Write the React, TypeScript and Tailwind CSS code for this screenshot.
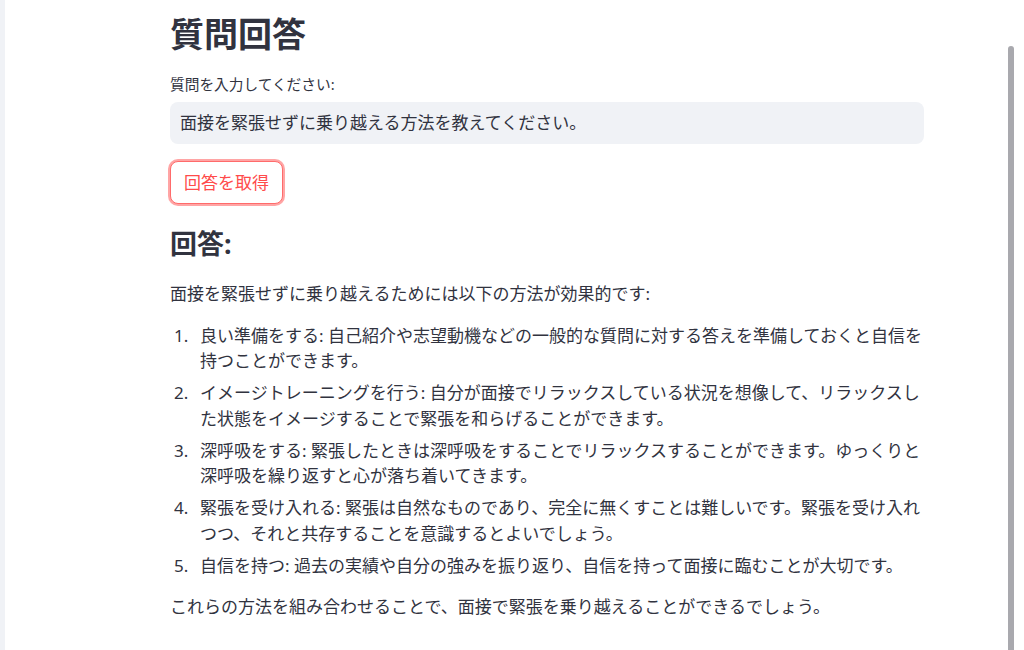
import React from "react";

const items: [string, string][] = [
  ["良い準備をする", "自己紹介や志望動機などの一般的な質問に対する答えを準備しておくと自信を持つことができます。"],
  ["イメージトレーニングを行う", "自分が面接でリラックスしている状況を想像して、リラックスした状態をイメージすることで緊張を和らげることができます。"],
  ["深呼吸をする", "緊張したときは深呼吸をすることでリラックスすることができます。ゆっくりと深呼吸を繰り返すと心が落ち着いてきます。"],
  ["緊張を受け入れる", "緊張は自然なものであり、完全に無くすことは難しいです。緊張を受け入れつつ、それと共存することを意識するとよいでしょう。"],
  ["自信を持つ", "過去の実績や自分の強みを振り返り、自信を持って面接に臨むことが大切です。"],
];

export default function App() {
  return (
    <div
      className="relative flex h-[650px] w-[1024px] overflow-hidden bg-white text-[#31333f]"
      style={{ fontFamily: '"Noto Sans", "Noto Sans CJK JP", sans-serif' }}
    >
      <div className="w-[5px] shrink-0 bg-[#f0f2f6]" />
      <main className="flex-1 pl-[165px]">
        <div className="w-[754px]">
          <h1 className="pt-[13px] text-[34px] font-bold leading-[42px] text-[#31333f]">質問回答</h1>
          <label className="mt-[19px] block text-[14.7px] leading-[20px] text-[#31333f]">質問を入力してください:</label>
          <div className="mt-[8px] flex h-[42px] items-center rounded-[8px] bg-[#f0f2f6] px-[10px] text-[17px]">
            面接を緊張せずに乗り越える方法を教えてください。
          </div>
          <button className="mt-[17px] flex h-[43px] items-center rounded-[8px] border border-[#ff6b6b] bg-white px-[13px] text-[17px] text-[#ff4b4b] shadow-[0_0_0_2px_rgba(255,75,75,0.5)]">
            回答を取得
          </button>
          <h3 className="mt-[22px] text-[27px] font-bold leading-[36px]">回答:</h3>
          <p className="mt-[19px] text-[17px] leading-[25.6px]">面接を緊張せずに乗り越えるためには以下の方法が効果的です:</p>
          <ol className="mt-[16px] text-[17px] leading-[25.6px]">
            {items.map(([h, t], i) => (
              <li key={h} className="mb-[6.4px] flex">
                <span className="w-[30px] shrink-0 pl-[4px]">{i + 1}.</span>
                <span className="flex-1">
                  {h}: {t}
                </span>
              </li>
            ))}
          </ol>
          <p className="mt-[15px] text-[17px] leading-[25.6px]">これらの方法を組み合わせることで、面接で緊張を乗り越えることができるでしょう。</p>
        </div>
      </main>
      <div className="absolute right-[10px] top-[46px] h-[620px] w-[6px] rounded-full bg-[#a9a9ae]" />
    </div>
  );
}
